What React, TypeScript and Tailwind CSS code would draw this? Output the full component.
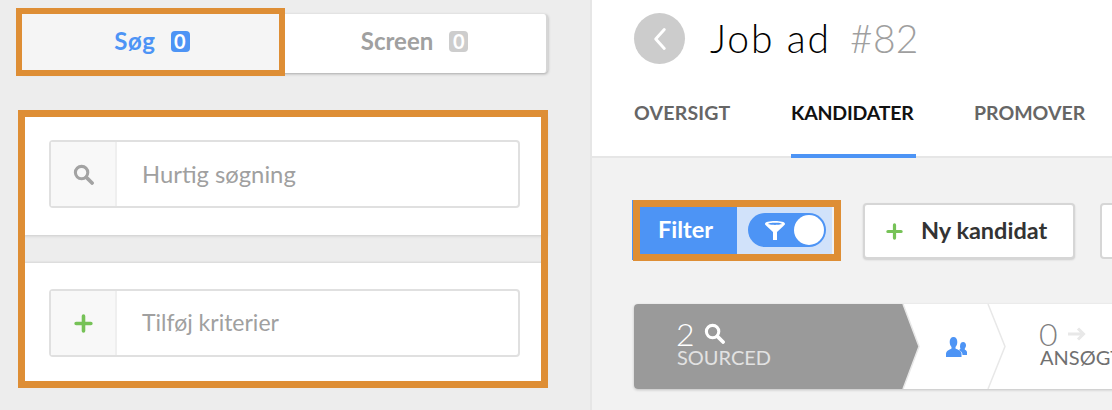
function SearchIcon({ className, stroke }: { className: string; stroke: string }) {
  return (
    <svg viewBox="0 0 22 22" className={className} fill="none" stroke={stroke}>
      <circle cx="9" cy="9" r="6.5" strokeWidth="3.2" />
      <path d="M14 14l6 6" strokeWidth="3.8" strokeLinecap="round" />
    </svg>
  );
}

function Plus({ className }: { className: string }) {
  return (
    <svg viewBox="0 0 18 18" className={className} fill="none" stroke="#76c257" strokeWidth="3.4" strokeLinecap="round">
      <path d="M9 2v14M2 9h14" />
    </svg>
  );
}

function Field({ icon, label, labelClass }: { icon: React.ReactNode; label: string; labelClass: string }) {
  return (
    <div className="flex h-[68px] w-[471px] rounded-[4px] border-2 border-[#e0e0e0] bg-white">
      <div className="flex w-[66px] shrink-0 items-center justify-center border-r-2 border-[#efefef] bg-[#f8f8f8]">{icon}</div>
      <div className={`flex items-center pl-[25px] text-[#a0a0a0] ${labelClass}`}>{label}</div>
    </div>
  );
}

function Overlay({ className }: { className: string }) {
  return <div className={`pointer-events-none absolute border-[#de8e35] ${className}`} />;
}

export default function App() {
  return (
    <div className="relative flex h-[410px] w-[1112px] overflow-hidden bg-[#f2f2f2] font-['Lato','Liberation_Sans',sans-serif]">
      {/* sidebar */}
      <aside className="flex w-[592px] shrink-0 flex-col border-r-2 border-[#e6e6e6] bg-[#ededed] pl-[24px] pt-[14px]">
        <div className="ml-[-3px] flex h-[59px] w-[527px] rounded-[4px] border-r-2 border-[#d6d6d6] bg-white shadow-[0_1px_3px_rgba(0,0,0,0.3)]">
          <div className="flex w-[262px] items-center justify-center gap-[15px] bg-[#f5f5f5] pb-[5px] text-[24px] font-bold tracking-[0.6px] text-[#4d94f5]">
            Søg
            <span className="flex h-[21px] w-[19px] items-center justify-center rounded-[4px] bg-[#4d94f5] text-[20px] leading-none text-white">0</span>
          </div>
          <div className="flex flex-1 items-center justify-center gap-[16px] pb-[5px] text-[24px] font-bold text-[#a0a0a0]">
            Screen
            <span className="flex h-[21px] w-[19px] items-center justify-center rounded-[4px] bg-[#cdcdcd] text-[20px] leading-none text-white">0</span>
          </div>
        </div>
        <div className="mt-[43px] flex h-[119px] w-[523px] bg-white pl-[25px] pt-[24px] shadow-[0_1px_3px_rgba(0,0,0,0.15)]">
          <Field icon={<SearchIcon className="h-[21px] w-[21px]" stroke="#a3a3a3" />} label="Hurtig søgning" labelClass="pt-[2px] text-[23.8px]" />
        </div>
        <div className="mt-[28px] flex h-[120px] w-[523px] bg-white pl-[25px] pt-[26px] shadow-[0_-1px_2px_rgba(0,0,0,0.1)]">
          <Field icon={<Plus className="h-[19px] w-[19px]" />} label="Tilføj kriterier" labelClass="pb-[2px] text-[23px]" />
        </div>
      </aside>

      {/* main */}
      <main className="flex min-w-0 flex-1 flex-col">
        <header className="h-[158px] shrink-0 border-b-2 border-[#e6e6e6] bg-white pl-[42px]">
          <div className="flex h-[78px] items-center pb-[1px]">
            <div className="flex h-[51px] w-[51px] shrink-0 items-center justify-center rounded-full bg-[#cccccc]">
              <svg viewBox="0 0 16 28" className="h-[24px] w-[14px]" fill="none" stroke="#fff" strokeWidth="3.4" strokeLinecap="round" strokeLinejoin="round">
                <path d="M13 3L3 14l10 11" />
              </svg>
            </div>
            <h1 className="ml-[25px] text-[39px] font-light leading-none tracking-[1.9px] text-black">Job ad</h1>
            <span className="ml-[19px] text-[39px] font-light leading-none tracking-[0.3px] text-[#9f9f9f]">#82</span>
          </div>
          <nav className="flex h-[78px] text-[19.5px] font-bold">
            <div className="w-[157px] pt-[23px] leading-[24px] tracking-[0.2px] text-[#666666]">OVERSIGT</div>
            <div className="relative w-[183px] pt-[23px] leading-[24px] tracking-[-0.2px] text-[#111111]">
              KANDIDATER
              <span className="absolute bottom-[-2px] left-0 h-[4px] w-[125px] bg-[#4d94f5]" />
            </div>
            <div className="pt-[23px] leading-[24px] text-[#666666]">PROMOVER</div>
          </nav>
        </header>

        <div className="flex items-start pl-[40px] pt-[42px]">
          <div className="flex h-[60px] w-[200px] shrink-0 overflow-hidden">
            <div className="flex w-[105px] items-center bg-[#4d94f5] pl-[26px] text-[23.5px] font-bold text-white">Filter</div>
            <div className="flex flex-1 items-center bg-[#d1e2fa] pl-[11px]">
              <div className="flex h-[34px] w-[78px] items-center justify-between rounded-full bg-[#4d94f5] pl-[17px] pr-[2px]">
                <svg viewBox="0 0 20 19" className="h-[19px] w-[20px]" fill="#fff">
                  <path fillRule="evenodd" d="M10 0c5.500 0 10 1 10 2.800 0 .9-.8 1.700-1.800 2.400L12 11v8H8v-8L1.800 5.200C.8 4.500 0 3.700 0 2.800 0 1 4.500 0 10 0zM10 1.700c-3.900 0-6.800.5-6.800 1.100S6.100 3.900 10 3.900s6.800-.5 6.800-1.100S13.900 1.700 10 1.700z" />
                </svg>
                <span className="h-[30px] w-[30px] rounded-full bg-white" />
              </div>
            </div>
          </div>
          <button className="ml-[31px] mt-[3px] flex h-[56px] w-[212px] shrink-0 items-center rounded-[4px] border-2 border-[#d6d6d6] bg-white pl-[21px] text-[23.5px] font-bold text-[#333333] shadow-[0_1px_2px_rgba(0,0,0,0.15)]">
            <Plus className="h-[17px] w-[17px]" />
            <span className="ml-[18px]">Ny kandidat</span>
          </button>
          <div className="ml-[25px] mt-[3px] h-[56px] w-[60px] shrink-0 rounded-[4px] border-2 border-[#d6d6d6] bg-white" />
        </div>

        <div className="relative ml-[42px] mt-[44px] flex h-[85px] w-[500px] shrink-0 rounded-[4px] bg-white shadow-[0_1px_3px_rgba(0,0,0,0.2)]">
          <div className="w-[285px] shrink-0 rounded-l-[4px] bg-[#9a9a9a] pl-[43px] pt-[15px] [clip-path:polygon(0_0,269px_0,285px_50%,269px_100%,0_100%)]">
            <div className="flex h-[29px] items-center gap-[9px] text-[32px] font-light leading-none text-white">
              <span className="-ml-[1px]">2</span>
              <SearchIcon className="h-[21px] w-[21px]" stroke="#fff" />
            </div>
            <div className="text-[20px] leading-[18px] text-[#e2e2e2]">SOURCED</div>
          </div>
          <div className="flex w-[86px] shrink-0 items-center justify-center pr-[12px]">
            <svg viewBox="0 0 21 20" className="h-[20px] w-[21px]" fill="#4d94f5">
              <path d="M7.500 0C10 0 11.300 2 11.300 5c0 2-.8 4-1.800 5v1.500c2 1 5.500 2 6 5V20H0v-3.500c.5-3 4-4 5.500-5V10C4.500 9 3.700 7 3.700 5 3.700 2 5 0 7.500 0z" />
              <path d="M17.200 5c1.700 0 2.800 1.300 2.800 3.300 0 1.300-.5 2.500-1.200 3.200v1.200c.9.4 2 .9 2.200 2.300v3h-4.500c0-2.500-1.500-3.800-3.500-5 .8-.5 1.200-.9 1.500-1.300-.3-.6-.5-1.300-.5-2.200C14 6.300 15.300 5 17.200 5z" />
            </svg>
          </div>
          <div className="pl-[35px] pt-[15px]">
            <div className="flex h-[29px] items-center gap-[10px] text-[32px] font-light leading-none text-[#808080]">
              <span className="-ml-[1px]">0</span>
              <svg viewBox="0 0 18 14" className="h-[14px] w-[18px]" fill="none" stroke="#e8e8e8" strokeWidth="3">
                <path d="M0 7h15M10 1.500L15.500 7 10 12.500" />
              </svg>
            </div>
            <div className="text-[20px] leading-[18px] text-[#707070]">ANSØGT</div>
          </div>
          <svg viewBox="0 0 400 85" className="pointer-events-none absolute left-0 top-0 h-[85px] w-[400px]" fill="none" stroke="#e8e8e8" strokeWidth="1.500">
            <path d="M354 0l17 42.500L354 85" />
            <path d="M269 0l16 42.500L269 85" />
          </svg>
        </div>
      </main>

      {/* highlight frames */}
      <Overlay className="left-[16px] top-[8px] h-[68px] w-[269px] border-[6px]" />
      <Overlay className="left-[18px] top-[110px] h-[278px] w-[530px] border-[7px]" />
      <Overlay className="left-[633px] top-[200px] h-[61px] w-[208px] border-[7px]" />
    </div>
  );
}
